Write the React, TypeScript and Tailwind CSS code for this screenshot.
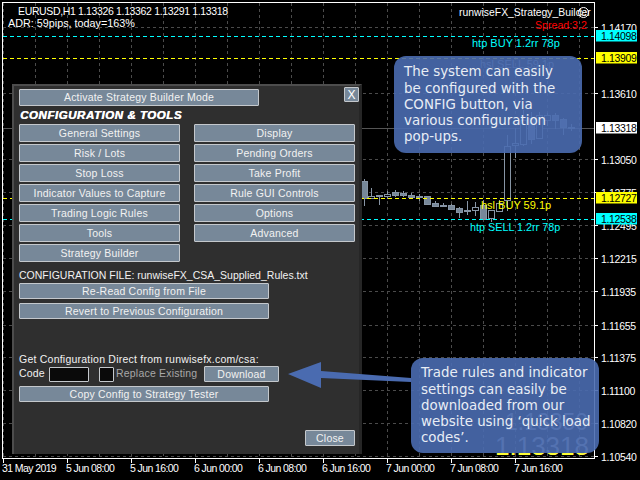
const prices: [string, number][] = [
  ["1.14170", 27], ["1.13610", 93], ["1.13050", 159], ["1.12775", 192], ["1.12495", 225],
  ["1.12215", 258], ["1.11935", 291], ["1.11655", 325], ["1.11375", 357], ["1.11100", 390],
  ["1.10820", 423], ["1.10540", 456],
]
const tags: [string, number, string][] = [
  ["1.14098", 36, "#00ffff"], ["1.13909", 58, "#ffff00"], ["1.13318", 128, "#ffffff"],
  ["1.12727", 198, "#ffff00"], ["1.12538", 219, "#00ffff"],
]
const times = ["31 May 2019", "5 Jun 08:00", "5 Jun 16:00", "6 Jun 00:00", "6 Jun 08:00", "6 Jun 16:00", "7 Jun 00:00", "7 Jun 08:00", "7 Jun 16:00"]
const gridX = Array.from({ length: 19 }, (_, i) => 3 + i * 32)

// x, bodyTop, bodyBottom, wickTop, wickBottom, filled
const candles: [number, number, number, number, number, boolean][] = [
  [364, 181, 198, 179, 206, true], [371, 196, 198, 188, 199, false], [379, 195, 196, 195, 205, false],
  [387, 194, 196, 191, 199, false], [395, 192, 195, 190, 197, true], [403, 193, 195, 191, 197, true],
  [411, 195, 197, 193, 199, true], [419, 196, 197, 194, 201, false], [427, 196, 204, 196, 205, true],
  [435, 203, 206, 201, 207, true], [443, 205, 206, 203, 207, false], [451, 205, 209, 204, 210, true],
  [459, 208, 212, 207, 218, true], [467, 210, 211, 201, 215, false], [475, 207, 210, 202, 216, false],
  [483, 205, 219, 200, 219, true], [491, 210, 218, 210, 222, false], [499, 203, 211, 200, 212, false],
  [507, 146, 200, 135, 211, false], [515, 143, 145, 128, 158, false], [523, 120, 144, 110, 146, false],
  [531, 118, 139, 112, 144, true], [539, 115, 138, 112, 139, false], [547, 115, 120, 113, 126, false],
  [555, 115, 120, 113, 129, true], [563, 119, 127, 118, 135, true], [571, 127, 128, 124, 131, false],
]

function Chart() {
  return (
    <svg width="640" height="480" className="absolute left-0 top-0 font-['Liberation_Sans',sans-serif] text-[10.5px]">
      <defs>
        <clipPath id="below-callout">
          <rect x="480" y="453" width="114" height="6" />
        </clipPath>
      </defs>
      {gridX.map((x) => (
        <line key={x} x1={x + 0.5} x2={x + 0.5} y1="3" y2="458" stroke="#4b4b4b" strokeDasharray="3 3" />
      ))}
      {prices.map(([p, y]) => (
        <line key={p} x1="3" x2="594" y1={y + 0.5} y2={y + 0.5} stroke="#4b4b4b" strokeDasharray="3 3" />
      ))}
      <line x1="3" x2="594" y1="128.5" y2="128.5" stroke="#555" />
      {candles.map(([x, t, b, wt, wb, filled]) => (
        <g key={x}>
          <line x1={x + 0.5} x2={x + 0.5} y1={wt} y2={wb} stroke="#8795a5" />
          <rect x={x - 2.5} y={t + 0.5} width="6" height={Math.max(b - t, 1)} fill={filled ? "#778899" : "#000"} stroke="#8795a5" />
        </g>
      ))}
      <line x1="3" x2="594" y1="36.5" y2="36.5" stroke="#00ffff" strokeDasharray="4 3" />
      <line x1="3" x2="594" y1="58.5" y2="58.5" stroke="#ffff00" strokeDasharray="4 3" />
      <line x1="3" x2="594" y1="198.5" y2="198.5" stroke="#ffff00" strokeDasharray="4 3" />
      <line x1="3" x2="594" y1="219.5" y2="219.5" stroke="#00ffff" strokeDasharray="4 3" />
      <rect x="2.5" y="2.5" width="592" height="456" fill="none" stroke="#fff" />

      <g letterSpacing="-0.35">
        {prices.map(([p, y]) => (
          <g key={p}>
            <line x1="594" x2="598" y1={y + 0.5} y2={y + 0.5} stroke="#fff" />
            <text x="601" y={y + 5} fill="#fff">{p}</text>
          </g>
        ))}
        {tags.map(([p, y, c]) => (
          <g key={p}>
            <rect x="596" y={y - 6} width="41" height="11.5" fill={c} />
            <text x="601" y={y + 4} fill="#000">{p}</text>
          </g>
        ))}
        {times.map((t, i) => (
          <g key={t}>
            <line x1={3.5 + i * 64} x2={3.5 + i * 64} y1="459" y2="463" stroke="#fff" />
            <text x={i === 0 ? 2 : 66 + (i - 1) * 64} y="472" fill="#fff" letterSpacing="-0.6">{t}</text>
          </g>
        ))}
        <text x="18" y="15" fill="#fff">EURUSD,H1</text>
        <text x="78" y="15" fill="#fff">1.13326 1.13362 1.13291 1.13318</text>
      </g>
      <text x="8" y="27" fill="#fff" fontSize="10.8">ADR: 59pips, today=163%</text>
      <text x="459" y="16" fill="#fff" fontSize="10.4">runwiseFX_Strategy_Builder</text>
      <circle cx="583.5" cy="12.5" r="5" fill="none" stroke="#fff" />
      <path d="M581 11h1M585 11h1M581 14.5q2.5 2 5 0" fill="none" stroke="#fff" />
      <text x="535" y="29" fill="#ff0000" fontSize="10.6">Spread:3.2</text>
      <text x="472" y="47" fill="#00ffff" fontSize="11">htp BUY 1.2rr 78p</text>
      <text x="480" y="68" fill="#8c96a8" fontSize="11">hsl SELL 59.1p</text>
      <text x="481" y="209" fill="#ffff00" fontSize="11">hsl BUY 59.1p</text>
      <text x="470" y="231" fill="#00ffff" fontSize="10.8">htp SELL 1.2rr 78p</text>
      <text x="505" y="430" fill="#a8b0b8" fontSize="23">1.13350</text>
      <text x="495" y="455" fill="#a8b0b8" fontSize="26">1.13318</text>
      <text x="495" y="455" fill="#ffff33" fontSize="26" clipPath="url(#below-callout)">1.13318</text>
    </svg>
  )
}

function Btn({ label, className }: { label: string; className: string }) {
  return (
    <button className={`flex items-center justify-center rounded-[1px] border border-[#c4c8cc] bg-[#778899] pt-[1px] text-[10.5px] tracking-[0.2px] text-[#f2f2f2] ${className}`}>
      {label}
    </button>
  )
}

const leftMenu = ["General Settings", "Risk / Lots", "Stop Loss", "Indicator Values to Capture", "Trading Logic Rules", "Tools", "Strategy Builder"]
const rightMenu = ["Display", "Pending Orders", "Take Profit", "Rule GUI Controls", "Options", "Advanced"]

function ConfigPanel() {
  return (
    <div className="absolute left-[12px] top-[84px] flex h-[370px] w-[350px] flex-col border-l-2 border-t-2 border-r-[3px] border-l-[#4d4d4d] border-t-[#4d4d4d] border-r-[#262626] bg-[#2f2f2f] pl-[5px] pt-[3px] font-['Liberation_Sans',sans-serif] text-[#f2f2f2]">
      <div className="flex h-[17px] items-start">
        <Btn label="Activate Strategy Builder Mode" className="h-[17px] w-[240px]" />
        <button className="ml-[85px] -mt-[2px] flex h-[15px] w-[15px] items-center justify-center rounded-[1px] border border-[#c4c8cc] bg-[#778899] text-[12px] leading-none text-white">X</button>
      </div>
      <div className="mt-[1px] h-[16px] whitespace-nowrap pl-[1px] text-[11.5px] font-bold italic leading-[16px] tracking-[0.55px] text-white [text-shadow:0.5px_0_0_#fff]">
        CONFIGURATION &amp; TOOLS
      </div>
      <div className="mt-[1px] flex gap-[14px]">
        <div className="flex w-[161px] flex-col gap-[2px]">
          {leftMenu.map((m) => <Btn key={m} label={m} className="h-[18px] w-full" />)}
        </div>
        <div className="flex w-[161px] flex-col gap-[2px]">
          {rightMenu.map((m) => <Btn key={m} label={m} className="h-[18px] w-full" />)}
        </div>
      </div>
      <div className="mt-[6px] h-[15px] whitespace-nowrap text-[10.5px] leading-[15px]">
        CONFIGURATION FILE: runwiseFX_CSA_Supplied_Rules.txt
      </div>
      <Btn label="Re-Read Config from File" className="h-[16px] w-[250px]" />
      <Btn label="Revert to Previous Configuration" className="mt-[4px] h-[16px] w-[250px]" />
      <div className="mt-[33px] h-[15px] whitespace-nowrap text-[10.5px] leading-[15px] tracking-[0.23px]">
        Get Configuration Direct from runwisefx.com/csa:
      </div>
      <div className="-mt-[1px] flex h-[16px] items-center text-[10.5px]">
        <span className="w-[30px] tracking-[0.2px]">Code</span>
        <div className="h-[15px] w-[40px] rounded-[1px] border border-[#c4c8cc] bg-[#0a0a0a]" />
        <div className="ml-[10px] h-[15px] w-[15px] rounded-[1px] border border-[#c4c8cc] bg-[#0a0a0a]" />
        <span className="ml-[2px] w-[88px] whitespace-nowrap tracking-[0.2px] text-[#a8a8a8]">Replace Existing</span>
        <Btn label="Download" className="h-[16px] w-[75px]" />
      </div>
      <Btn label="Copy Config to Strategy Tester" className="mt-[4px] h-[16px] w-[250px]" />
      <div className="mt-[28px] flex justify-end pr-[4px]">
        <Btn label="Close" className="h-[16px] w-[50px]" />
      </div>
    </div>
  )
}

function Callout({ className, children }: { className: string; children: React.ReactNode }) {
  return (
    <div className={`absolute flex items-center rounded-[12px] bg-[#4a6bb0]/90 pl-[10px] pt-[1px] font-['DejaVu_Sans',sans-serif] text-[13.4px] leading-[16.3px] text-[#e8edf5] ${className}`}>
      <p className="whitespace-pre-line">{children}</p>
    </div>
  )
}

export default function App() {
  return (
    <div className="relative h-[480px] w-[640px] overflow-hidden bg-black">
      <Chart />
      <ConfigPanel />
      <Callout className="left-[394px] top-[56px] h-[97px] w-[188px]">
        {"The system can easily\nbe configured with the\nCONFIG button, via\nvarious configuration\npop-ups."}
      </Callout>
      <svg width="130" height="30" className="absolute left-[285px] top-[360px]">
        <path d="M3 14 L36 2 L36 11 L126 18 L126 22 L36 18 L36 28 Z" fill="#4a6bb0" />
      </svg>
      <Callout className="left-[411px] top-[358px] h-[95px] w-[188px]">
        {"Trade rules and indicator\nsettings can easily be\ndownloaded from our\nwebsite using ‘quick load\ncodes’."}
      </Callout>
    </div>
  )
}
